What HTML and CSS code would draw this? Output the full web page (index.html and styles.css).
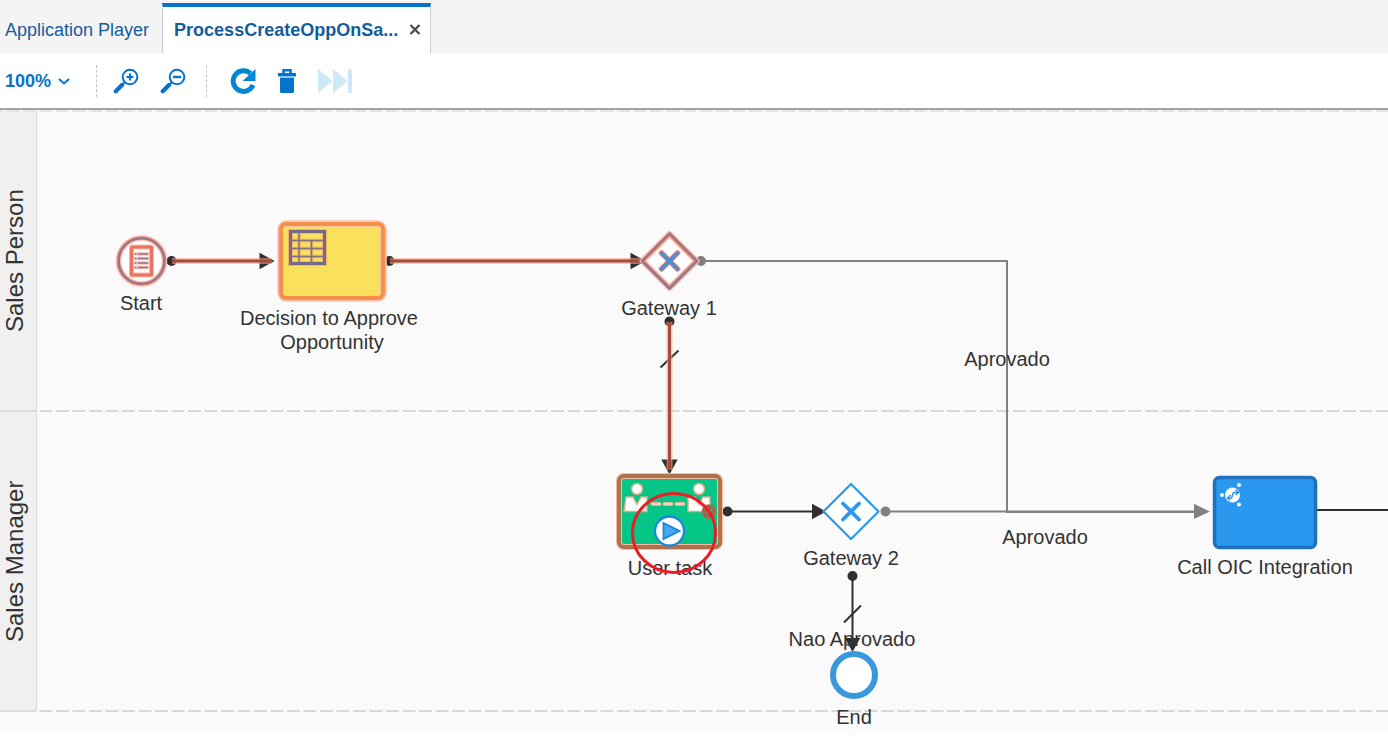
FILE: index.html
```html
<!DOCTYPE html>
<html lang="en">
<head>
<meta charset="utf-8">
<title>Process Player</title>
<link rel="stylesheet" href="styles.css">
</head>
<body>
<header class="tabs">
  <a class="tab" href="#player">Application Player</a>
  <div class="tab tab-active">
    <a class="tab-link" href="#process">ProcessCreateOppOnSa...</a>
    <button class="tab-close" type="button" aria-label="Close tab">
      <svg width="12" height="12" viewBox="0 0 12 12"><path d="M1.500 1l9 9M10.500 1l-9 9" fill="none" stroke="#4a4a4a" stroke-width="2.300"/></svg>
    </button>
  </div>
</header>

<div class="toolbar">
  <button class="zoom-level" type="button">100%
    <svg width="12" height="8" viewBox="0 0 12 8"><path d="M1 1l5 4.500 5-4.500" fill="none" stroke="#0572ce" stroke-width="2"/></svg>
  </button>
  <span class="divider"></span>
  <div class="tools tools-zoom">
    <button class="tool" type="button" aria-label="Zoom in">
      <svg width="26" height="26" viewBox="0 0 26 26"><g fill="none" stroke="#0572ce"><circle cx="17" cy="9" r="7.300" stroke-width="2"/><path d="M17 5.500v7M13.500 9h7" stroke-width="2.200"/><path d="M11.800 14.200l-2.300 2.300" stroke-width="2"/><path d="M9 17l-6.200 6.200" stroke-width="4.200" stroke-linecap="round"/></g></svg>
    </button>
    <button class="tool" type="button" aria-label="Zoom out">
      <svg width="26" height="26" viewBox="0 0 26 26"><g fill="none" stroke="#0572ce"><circle cx="17" cy="9" r="7.300" stroke-width="2"/><path d="M13 9h8" stroke-width="2.400"/><path d="M11.800 14.200l-2.300 2.300" stroke-width="2"/><path d="M9 17l-6.200 6.200" stroke-width="4.200" stroke-linecap="round"/></g></svg>
    </button>
  </div>
  <span class="divider"></span>
  <div class="tools tools-run">
    <button class="tool" type="button" aria-label="Refresh">
      <svg width="26" height="26" viewBox="0 0 26 26"><path d="M20.500 5.500A10.300 10.300 0 1 0 23 17" fill="none" stroke="#0486d6" stroke-width="5"/><path d="M25.500 1v12H12.500z" fill="#0486d6"/></svg>
    </button>
    <button class="tool" type="button" aria-label="Delete">
      <svg width="18" height="26" viewBox="0 0 18 26"><path d="M5.500 5V2.200h7V5" fill="none" stroke="#0572ce" stroke-width="2.600"/><path d="M0 5h18v3.500H0z" fill="#0572ce"/><path d="M2 8.500h14V10H2z" fill="#8fc4ee"/><path d="M2 10h14v13.500q0 1.500-1.500 1.500h-11Q2 25 2 23.500z" fill="#0572ce"/></svg>
    </button>
    <button class="tool" type="button" aria-label="Skip to end" disabled>
      <svg width="34" height="26" viewBox="0 0 34 26"><path d="M0 1l14.500 12L0 25zM15 1l14.500 12L15 25z" fill="#cde8f7"/><path d="M30 1h2.500q1.500 0 1.500 1.500v21q0 1.500-1.500 1.500H30z" fill="#cde8f7"/></svg>
    </button>
  </div>
</div>

<main class="board">
  <section class="lane"><h2 class="lane-name">Sales Person</h2></section>
  <section class="lane"><h2 class="lane-name">Sales Manager</h2></section>

  <svg class="diagram" aria-label="Process diagram">
    <g class="lane-lines">
      <path d="M-10 1H4000" class="lane-line-top"/>
      <path d="M-10 301H4000M-10 601H4000"/>
      <path class="lane-line-solid" d="M0 301H36M0 601H36"/>
    </g>

    <!-- sequence flows -->
    <g class="flow-grey">
      <path d="M701 151H1007V402H1196"/>
      <path d="M885 401.500H1196"/>
      <circle cx="701" cy="151" r="4"/><circle cx="885.500" cy="401.500" r="4"/>
      <path class="head" d="M1195 395.500l12.500 6-12.500 6z"/>
    </g>
    <g class="flow">
      <path d="M727 401.500H814M852.500 466V528M1316 400H4000"/>
      <circle cx="727.500" cy="401.500" r="4"/><circle cx="852.500" cy="466" r="4"/>
      <path class="head" d="M813 395.500l11 6-11 6zM846.500 529h12l-6 11z"/>
      <path d="M844 512.500l17-17"/>
    </g>
    <g class="flow">
      <circle cx="171.500" cy="151" r="4"/><circle cx="389.500" cy="151" r="4"/><circle cx="669.500" cy="211.500" r="4"/>
      <path class="head" d="M260.500 144.500l12 6.500-12 6.500zM631.500 144.500l12 6.500-12 6.500zM663 350.500h13l-6.500 12z"/>
      <path d="M660.500 257.500l18-17"/>
    </g>
    <g class="flow-done-glow"><path d="M172 151H272M390 151H640M669.500 212V360"/></g>
    <g class="flow-done"><path d="M172 151H272M390 151H640M669.500 212V360"/></g>

    <!-- start event -->
    <g fill="none" transform="translate(141.500 151)">
      <circle r="23" fill="#fff" stroke="#fbb9aa" stroke-width="5.500"/>
      <circle r="23" stroke="#e8816f" stroke-width="3"/>
      <circle r="22.800" stroke="#8a7894" stroke-width="2"/>
      <rect x="-10" y="-14" width="20" height="28" rx="1" stroke="#fbb9aa" stroke-width="5"/>
      <rect x="-10" y="-14" width="20" height="28" rx="1" stroke="#ea7463" stroke-width="3"/>
      <path d="M-7-7H7M-7-2.500H7M-7 2H7M-7 6.500H7" stroke="#fbc3b6" stroke-width="3.500"/>
      <path d="M-7-7h2m1.500 0H7M-7-2.500h2m1.500 0H7M-7 2h2m1.500 0H7M-7 6.500h2m1.500 0H7" stroke="#9a7184" stroke-width="1.500"/>
    </g>

    <!-- decision task -->
    <g fill="none" transform="translate(332 151)">
      <rect x="-51.500" y="-37.500" width="103" height="75" rx="6" fill="#fae15d" stroke="#fcc0ae" stroke-width="6.500"/>
      <rect x="-51" y="-37" width="102" height="74" rx="5" stroke="#f58f4c" stroke-width="4"/>
      <rect x="-41.500" y="-29.500" width="34" height="32" stroke="#f5b668" stroke-width="5"/>
      <path d="M-42-20.500H-7M-42-12.500H-7M-42-4.500H-7M-33-30V3M-20.500-20V3" stroke="#f5b668" stroke-width="3.500"/>
      <rect x="-41.500" y="-29.500" width="34" height="32" stroke="#766888" stroke-width="3"/>
      <path d="M-42-20.500H-7M-42-12.500H-7M-42-4.500H-7M-33-30V3M-20.500-20V3" stroke="#827080" stroke-width="1.500"/>
    </g>

    <!-- gateway 1 -->
    <g fill="none" stroke-linejoin="round" stroke-linecap="round" transform="translate(669.500 151)">
      <path d="M0-27L27 0 0 27-27 0z" fill="#fff" stroke="#fbbaab" stroke-width="6"/>
      <path d="M0-27L27 0 0 27-27 0z" stroke="#e8816f" stroke-width="3.500"/>
      <path d="M0-27.500L27.500 0 0 27.500-27.500 0z" stroke="#8a7894" stroke-width="2"/>
      <path d="M-8-8L8 8M8-8L-8 8" stroke="#fbaa99" stroke-width="6"/>
      <path d="M-8-8L8 8M8-8L-8 8" stroke="#8a7894" stroke-width="4"/>
      <path d="M-7.500-7.500l15 15M7.500-7.500l-15 15" stroke="#4b91d6" stroke-width="3"/>
    </g>

    <!-- user task -->
    <g fill="none" transform="translate(669.500 401.500)">
      <rect x="-50.500" y="-35.500" width="101" height="71" rx="5" fill="#05c687" stroke="#fab8a4" stroke-width="6"/>
      <rect x="-50.500" y="-35.500" width="101" height="71" rx="5" stroke="#ad744b" stroke-width="4"/>
      <g fill="#fff" stroke="#d9ae87" stroke-width="1.500">
        <circle cx="-32.500" cy="-22.500" r="5.500"/><path d="M-43.500-14.500h7l4 7.500 4-7.500h6V0h-23z"/>
        <circle cx="29.500" cy="-22.500" r="5.500"/><path d="M18.500-14.500h7l4 7.500 4-7.500h7V0h-22z"/>
      </g>
      <path d="M-17-7.500h7M-5-7.500H2M7-7.500h7" stroke="#d9ae87" stroke-width="4" stroke-linecap="round"/>
      <path d="M-17-7.500h7M-5-7.500H2M7-7.500h7" stroke="#ffcdbc" stroke-width="2.500" stroke-linecap="round"/>
      <circle cx="39.500" cy="0" r="6" fill="#5d8053" stroke="#ad654a" stroke-width="2.500"/>
      <path d="M36.500 0l2.500 2 4-5" stroke="#bb6f55" stroke-width="2"/>
      <circle cx="0" cy="19.500" r="14.500" fill="#fff" stroke="#1789dc" stroke-width="2.300"/>
      <path d="M-6 11.500V27.500L10 19.500z" fill="#48a6f2" stroke="#1587dc" stroke-width="1.800"/>
    </g>

    <!-- gateway 2 -->
    <g fill="none" stroke="#2c98f0" stroke-linejoin="round" stroke-linecap="round" transform="translate(851 401.500)">
      <path d="M0-27.500L27.500 0 0 27.500-27.500 0z" fill="#fff" stroke-width="2.200"/>
      <path d="M-8-8L8 8M8-8L-8 8" stroke-width="3.800"/>
    </g>

    <!-- end event -->
    <circle cx="854" cy="565" r="21" fill="#fff" stroke="#3a98dc" stroke-width="6"/>

    <!-- integration call -->
    <g fill="#fff" transform="translate(1265 402)">
      <rect x="-50.500" y="-34.500" width="101" height="70" rx="5" fill="#2b98f0" stroke="#1f70bf" stroke-width="3.500"/>
      <circle cx="-32.500" cy="-17" r="7.500"/>
      <circle cx="-43" cy="-17" r="2"/><circle cx="-26" cy="-27" r="2"/><circle cx="-26" cy="-7.500" r="2"/>
      <path d="M-38-14h4.500l2-5.500h4M-29.500-22.500l3 3-3 2.500M-34.500-17l-3 3 2.500 2.500" fill="none" stroke="#2b98f0" stroke-width="1.500"/>
    </g>

    <g class="labels">
      <text x="141" y="200">Start</text>
      <text x="329" y="215">Decision to Approve</text>
      <text x="332" y="239">Opportunity</text>
      <text x="669" y="205">Gateway 1</text>
      <text x="1007" y="256">Aprovado</text>
      <text x="1045" y="434">Aprovado</text>
      <text x="670" y="465">User task</text>
      <text x="851" y="455">Gateway 2</text>
      <text x="852" y="536">Nao Aprovado</text>
      <text x="854" y="614">End</text>
      <text x="1265" y="464">Call OIC Integration</text>
    </g>

    <ellipse cx="674" cy="423" rx="41.500" ry="39.500" fill="none" stroke="#ed1c24" stroke-width="3"/>
  </svg>
</main>
</body>
</html>
```
FILE: styles.css
```css
* { box-sizing: border-box; }

body {
  margin: 0;
  background: #fff;
  color: #333;
  font-family: "Liberation Sans", Arial, sans-serif;
}

button {
  margin: 0;
  padding: 0;
  border: 0;
  background: none;
  font: inherit;
  cursor: pointer;
}

svg { display: block; }

a { color: #145c9e; text-decoration: none; }

.tabs {
  display: flex;
  align-items: stretch;
  height: 53px;
  padding-top: 3px;
  background: #f4f4f4;
  font-size: 18px;
}

.tab {
  display: flex;
  align-items: center;
  padding: 4px 13px 0 5px;
}

.tab-active {
  gap: 11px;
  padding: 0 9px 0 11px;
  border: 1px solid #c4ced7;
  border-top: 4px solid #0572ce;
  border-bottom: 0;
  background: #fff;
  font-weight: bold;
}

.toolbar {
  display: flex;
  align-items: center;
  height: 57px;
  border-bottom: 2px solid #a3a3a3;
  background: #fff;
}

.zoom-level {
  display: flex;
  align-items: center;
  gap: 7px;
  width: 96px;
  padding: 2px 0 0 5px;
  color: #0572ce;
  font-size: 18px;
  font-weight: bold;
}

.divider {
  height: 32px;
  border-left: 1px dashed #c4c4c4;
}

.tools { display: flex; align-items: center; }

.tools-zoom { gap: 21px; padding: 0 20px 0 16px; }

.tools-run { gap: 22px; padding-left: 23px; }

.board {
  position: relative;
  padding: 1px 0 20px;
  overflow: hidden;
  background: #fafafa;
}

.lane { display: flex; height: 300px; }

.lane-name {
  display: flex;
  align-items: center;
  justify-content: center;
  width: 37px;
  margin: 0;
  padding-left: 6px;
  border-left: 1px solid #d9d9d9;
  background: #f0f0f0;
  font-size: 24px;
  font-weight: normal;
  line-height: 28px;
  writing-mode: vertical-rl;
  transform: rotate(180deg);
}

.diagram {
  position: absolute;
  inset: 0;
  width: 100%;
  height: 100%;
}

.lane-lines { fill: none; stroke: #d8d8d8; stroke-width: 2; stroke-dasharray: 13 3.5; }
.lane-line-top { stroke: #e4e4e4; }
.lane-line-solid { stroke: #dcdcdc; stroke-dasharray: none; }

.flow, .flow-grey { fill: none; stroke: #2f2f2f; stroke-width: 2; }
.flow circle, .flow .head { fill: #2f2f2f; }
.flow-grey { stroke: #808080; }
.flow-grey circle, .flow-grey .head { fill: #808080; }

.flow-done-glow { fill: none; stroke: #f8a08e; stroke-width: 6; stroke-opacity: 0.6; }
.flow-done { fill: none; stroke: #a14c3d; stroke-width: 3; }

.labels { fill: #333; font-size: 20px; text-anchor: middle; }
```
